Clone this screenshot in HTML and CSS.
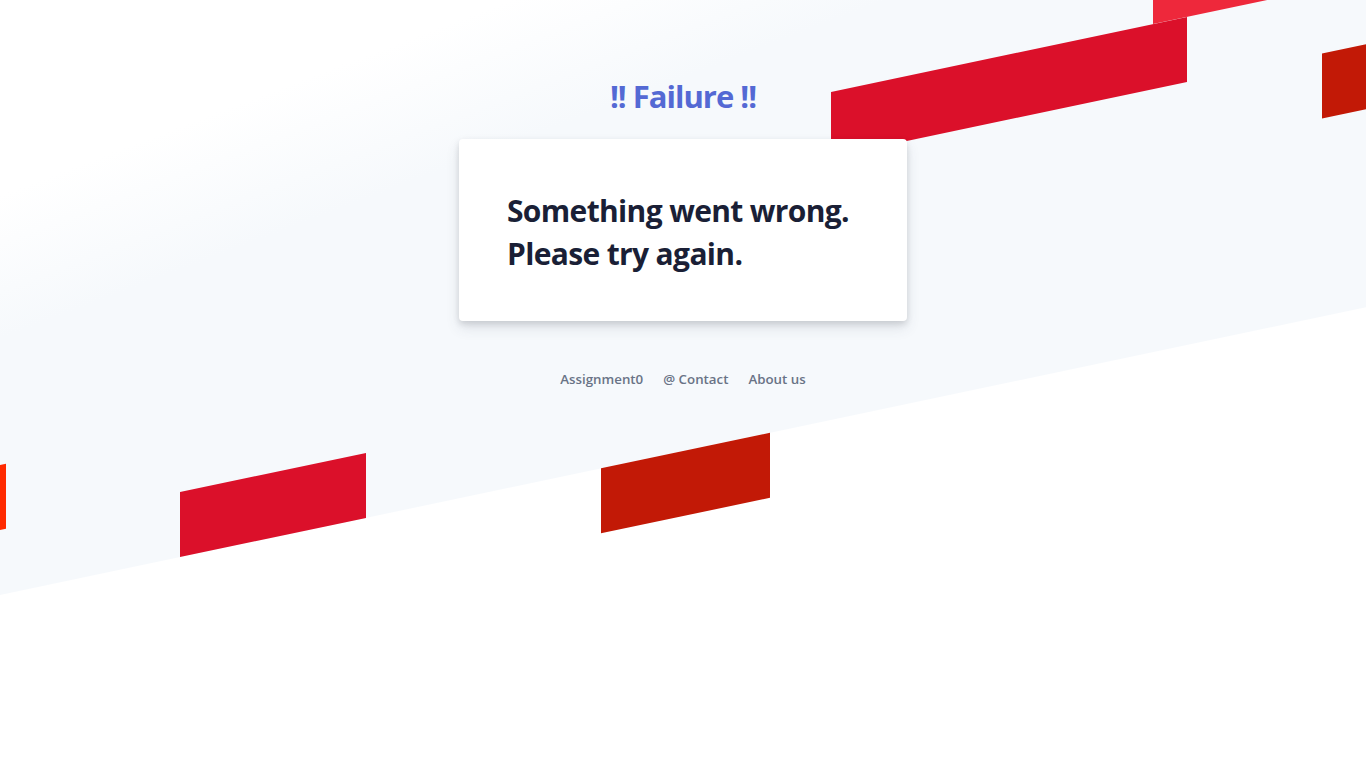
FILE: index.html
```html
<!DOCTYPE html>
<html lang="en">
<head>
<meta charset="utf-8">
<title>Failure</title>
<link rel="stylesheet" href="styles.css">
</head>
<body>
<div class="page">
  <svg class="backdrop" width="1366" height="768" viewBox="0 0 1366 768" aria-hidden="true">
    <defs>
      <linearGradient id="bgfade" gradientUnits="userSpaceOnUse" x1="0" y1="195" x2="24" y2="335">
        <stop offset="0" stop-color="#ffffff"/>
        <stop offset="1" stop-color="#f6f9fc"/>
      </linearGradient>
    </defs>
    <g transform="matrix(1,-0.2107,0,1,0,0)">
      <rect x="-10" y="-100" width="1400" height="695" fill="url(#bgfade)"/>
      <rect x="1153" y="202" width="400" height="65" fill="#ee283b"/>
      <rect x="831" y="267" width="356" height="65" fill="#db102a"/>
      <rect x="1322" y="332" width="200" height="65" fill="#c21906"/>
      <rect x="-200" y="465" width="206" height="65" fill="#ff2a00"/>
      <rect x="180" y="530" width="186" height="65" fill="#db102a"/>
      <rect x="601" y="595" width="169" height="65" fill="#c21906"/>
    </g>
  </svg>

  <main class="content">
    <h1 class="title">!! Failure !!</h1>
    <section class="card">
      <p class="message">Something went wrong.<br>Please try again.</p>
    </section>
    <nav class="footer">
      <a class="footer-link" href="#">Assignment0</a>
      <a class="footer-link" href="#">@ Contact</a>
      <a class="footer-link" href="#">About us</a>
    </nav>
  </main>
</div>
</body>
</html>
```
FILE: styles.css
```css
* { box-sizing: border-box; }

html, body {
  margin: 0;
  padding: 0;
  background: #ffffff;
}

body {
  font-family: "Open Sans", "Noto Sans", "Liberation Sans", sans-serif;
  color: #1a1f36;
}

.page {
  position: relative;
  width: 100%;
  min-height: 100vh;
  overflow: hidden;
}

.backdrop {
  position: absolute;
  top: 0;
  left: 0;
  display: block;
  z-index: 0;
}

.content {
  position: relative;
  z-index: 1;
  display: flex;
  flex-direction: column;
  align-items: center;
  padding-top: 76px;
}

.title {
  margin: 0 0 23px;
  font-size: 31px;
  line-height: 40px;
  font-weight: 700;
  color: #5469d4;
  letter-spacing: -1px;
}

.card {
  width: 448px;
  padding: 50px 48px 46px;
  background: #ffffff;
  border-radius: 4px;
  box-shadow: 0 7px 14px 0 rgba(60, 66, 87, 0.12), 0 3px 6px 0 rgba(0, 0, 0, 0.12);
}

.message {
  margin: 0;
  font-size: 30px;
  line-height: 43px;
  font-weight: 700;
  color: #1a1f36;
  letter-spacing: -0.65px;
}

.footer {
  display: flex;
  gap: 20px;
  margin-top: 48px;
}

.footer-link {
  font-size: 13.3px;
  line-height: 20px;
  font-weight: 600;
  color: #697386;
  text-decoration: none;
}
```
